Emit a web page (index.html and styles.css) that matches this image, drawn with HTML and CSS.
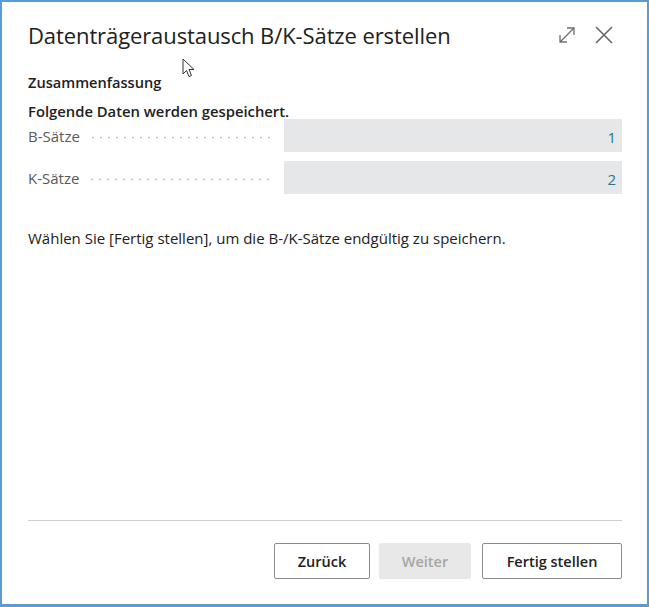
FILE: index.html
```html
<!DOCTYPE html>
<html lang="de">
<head>
<meta charset="utf-8">
<link rel="stylesheet" href="styles.css">
</head>
<body>
<div class="dialog">
  <div class="header">
    <h1 class="title">Datenträgeraustausch B/K-Sätze erstellen</h1>
    <div class="header-icons">
      <svg class="icon" width="20" height="20" viewBox="0 0 20 20"><path d="M3 17 L17 3 M10 3 H17 V10 M3 10 V17 H10" fill="none" stroke="#707070" stroke-width="1.3"/></svg>
      <svg class="icon" width="20" height="20" viewBox="0 0 20 20"><path d="M2 2 L18 18 M18 2 L2 18" fill="none" stroke="#666" stroke-width="1.6"/></svg>
    </div>
  </div>
  <div class="content">
    <div class="section">Zusammenfassung</div>
    <div class="subhead">Folgende Daten werden gespeichert.</div>
    <div class="field">
      <div class="label"><span>B-Sätze</span><span class="dots"></span></div>
      <div class="value">1</div>
    </div>
    <div class="field">
      <div class="label"><span>K-Sätze</span><span class="dots"></span></div>
      <div class="value">2</div>
    </div>
    <p class="info">Wählen Sie [Fertig stellen], um die B-/K-Sätze endgültig zu speichern.</p>
  </div>
  <div class="footer">
    <button class="btn">Zurück</button>
    <button class="btn disabled">Weiter</button>
    <button class="btn wide">Fertig stellen</button>
  </div>
  <svg class="cursor" width="14" height="22" viewBox="0 0 14 22"><path d="M1 1 L1 16 L4.5 12.5 L7 18.5 L9.5 17.5 L7 11.5 L12 11.5 Z" fill="#fff" stroke="#333" stroke-width="1"/></svg>
</div>
</body>
</html>
```
FILE: styles.css
```css
* { box-sizing: border-box; }
html, body { margin: 0; padding: 0; background: #fff; }
body { font-family: "Open Sans", "Noto Sans", sans-serif; color: #212121; }
.dialog {
  position: relative;
  width: 649px;
  height: 607px;
  border: 2px solid #5b9bd5;
  border-bottom-width: 3px;
  display: flex;
  flex-direction: column;
  padding: 0 25px 0 26px;
}
.header {
  display: flex;
  align-items: center;
  justify-content: space-between;
  height: 66px;
}
.title {
  margin: 0;
  font-size: 22px;
  font-weight: 400;
  letter-spacing: -0.1px;
  color: #212121;
}
.header-icons { display: flex; gap: 17px; margin-right: 8px; }
.icon { display: block; }
.content { flex: 1; }
.section { font-size: 14.6px; font-weight: 600; margin-top: 4px; height: 29px; line-height: 20px; }
.subhead { font-size: 14.8px; font-weight: 600; height: 18px; line-height: 20px; }
.field { display: flex; align-items: center; height: 33px; margin-bottom: 9px; }
.label { width: 256px; display: flex; align-items: center; font-size: 15px; color: #5a5a5a; }
.dots {
  flex: 1;
  margin: 3px 11px 0 9px;
  height: 3px;
  background-image: radial-gradient(circle, #c4c4c4 0.9px, transparent 1.2px);
  background-size: 8px 3px;
  background-repeat: repeat-x;
}
.value {
  flex: 1;
  height: 33px;
  background: #e6e7e8;
  color: #237a85;
  font-size: 15px;
  line-height: 20px;
  text-align: right;
  padding: 8px 6px 0 0;
}
.info { font-size: 15px; margin: 34px 0 0 0; line-height: 20px; color: #212121; }
.footer {
  border-top: 1px solid #cfcfcf;
  height: 84px;
  display: flex;
  justify-content: flex-end;
  align-items: flex-start;
  padding-top: 22px;
  gap: 9px;
}
.btn {
  font-family: inherit;
  font-size: 14.5px;
  font-weight: 600;
  height: 36px;
  width: 96px;
  background: #fff;
  border: 1px solid #8a8a8a;
  border-radius: 2px;
  color: #212121;
}
.btn.disabled { background: #e8e8e8; border-color: #e8e8e8; color: #a6a6a6; width: 92px; }
.btn.wide { width: 140px; margin-left: 2px; }
.cursor { position: absolute; left: 180px; top: 56px; }
```
